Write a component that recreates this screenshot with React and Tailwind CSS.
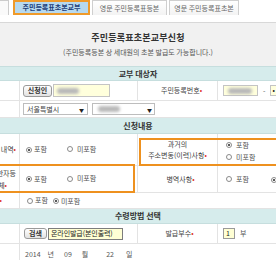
const Dot = () => <span className="text-[#e0322c]">•</span>;

function Radio({ checked }) {
  return (
    <span className="inline-flex items-center justify-center w-[6px] h-[6px] rounded-full border border-[#8a8a8a] bg-white shrink-0">
      {checked && <span className="w-[2px] h-[2px] rounded-full bg-[#222]" />}
    </span>
  );
}

function Opt({ checked, label, gap = "gap-[3px]" }) {
  return (
    <span className={`inline-flex items-center ${gap}`}>
      <Radio checked={checked} />
      <span>{label}</span>
    </span>
  );
}

function Header({ children, h }) {
  return (
    <div className={`${h} bg-[#d6ecec] border-b border-[#c6dede] flex items-center justify-center text-[8px] font-bold text-[#333]`}>
      <span>{children}</span>
    </div>
  );
}

function Blur({ w }) {
  return <span className={`block h-[6px] ${w} bg-[#b9b9b9] blur-[1.5px] rounded-sm`} />;
}

export default function App() {
  return (
    <div className="w-[276px] h-[260px] overflow-hidden bg-white text-[#444] font-['Noto_Sans_CJK_KR','Noto_Sans',sans-serif] leading-none">
      {/* tabs */}
      <div className="flex h-[15px] items-stretch">
        <div className="ml-[-67px] w-[76px] border border-t-[#ccc] border-x-[#ccc] border-b-0 bg-[#fafafa] flex items-center justify-center text-[7px] text-[#666]">주민등록표등본</div>
        <div className="ml-[4px] w-[77px] border-2 border-[#ef9a2a] bg-[#b7d9ef] flex items-center justify-center text-[7px] font-bold text-[#1c3d78]">주민등록표초본교부</div>
        <div className="ml-[2px] w-[75px] border border-[#cfcfcf] border-b-0 bg-gradient-to-b from-white to-[#f3f3f3] flex items-center justify-center text-[7px] text-[#666]">영문 주민등록표등본</div>
        <div className="ml-[2px] w-[70px] border border-[#cfcfcf] border-b-0 bg-gradient-to-b from-white to-[#f3f3f3] flex items-center justify-center text-[7px] text-[#666]">영문 주민등록표초본</div>
      </div>

      {/* title box */}
      <div className="mt-[7px] h-[44px] border-t border-[#d8d8d8] bg-[#f1f1f1] flex flex-col items-center pt-[9px]">
        <div className="text-[9px] font-bold text-[#333] leading-[12px] tracking-[0.2px]">주민등록표초본교부신청</div>
        <div className="mt-[3px] text-[7px] text-[#555] leading-[10px]">(주민등록등본 상 세대원의 초본 발급도 가능합니다.)</div>
      </div>

      {/* table */}
      <div className="relative ml-[-60px] w-[396px]">
        <div className="border-t border-[#c6dede]">
          <Header h="h-[14px]">교부 대상자</Header>

          {/* row 1 */}
          <div className="grid grid-cols-[80px_118px_80px_118px] h-[20px] border-b border-[#e3e3e3] text-[7px]">
            <div className="border-r border-[#e3e3e3] flex items-center justify-center">성명<Dot /></div>
            <div className="border-r border-[#e3e3e3] flex items-center pl-[3px] gap-[1px]">
              <span className="h-[12px] w-[29px] rounded-[3px] border border-[#9a9a9a] bg-gradient-to-b from-white to-[#e2e2e2] flex items-center justify-center font-bold text-[#333]">신청인</span>
              <span className="h-[13px] w-[57px] border border-[#c4c4c4] bg-[#ffffdc] flex items-center pl-[3px]"><Blur w="w-[22px]" /></span>
            </div>
            <div className="border-r border-[#e3e3e3] flex items-center justify-center pl-[8px]">주민등록번호<Dot /></div>
            <div className="flex items-center pl-[5px]">
              <span className="h-[11px] w-[35px] border border-[#c4c4c4] bg-[#ffffdc] flex items-center pl-[4px]"><Blur w="w-[24px]" /></span>
              <span className="mx-[5px] text-[#555]">-</span>
              <span className="h-[11px] w-[30px] border border-[#c4c4c4] bg-[#ffffdc] flex items-center pl-[1px] text-[#222]">•</span>
            </div>
          </div>

          {/* row 2 */}
          <div className="grid grid-cols-[80px_316px] h-[17px] border-b border-[#e3e3e3] text-[7px]">
            <div className="border-r border-[#e3e3e3] flex items-center justify-center">주소<Dot /></div>
            <div className="flex items-center pl-[3px] gap-[4px]">
              <span className="h-[12px] w-[65px] border border-[#bdbdbd] bg-white flex items-center justify-between pl-[3px] pr-[3px] text-[#444]">
                <span>서울특별시</span><span className="text-[5px] text-[#222]">▼</span>
              </span>
              <span className="h-[12px] w-[63px] border border-[#bdbdbd] bg-white flex items-center justify-between pl-[5px] pr-[2px]">
                <Blur w="w-[22px]" /><span className="text-[5px] text-[#222]">▼</span>
              </span>
            </div>
          </div>

          <Header h="h-[16px]">신청내용</Header>

          {/* row A */}
          <div className="grid grid-cols-[80px_118px_80px_118px] h-[32px] border-b border-[#e3e3e3] text-[7px]">
            <div className="border-r border-[#e3e3e3] flex items-center justify-end pr-[3px] whitespace-nowrap">인적사항 변경 내역<Dot /></div>
            <div className="border-r border-[#e3e3e3] flex items-center pl-[6px] text-[#555]">
              <Opt checked label="포함" gap="gap-[2px]" />
              <span className="ml-[20px]"><Opt label="미포함" gap="gap-[4px]" /></span>
            </div>
            <div className="border-r border-[#e3e3e3] flex flex-col items-center justify-center leading-[11px] whitespace-nowrap">
              <span>과거의</span>
              <span>주소변동(이력)사항<Dot /></span>
            </div>
            <div className="flex flex-col justify-center pl-[8px] gap-[5px] text-[#555] pt-[3px]">
              <Opt checked label="포함" gap="gap-[4px]" />
              <Opt label="미포함" gap="gap-[4px]" />
            </div>
          </div>

          {/* row B */}
          <div className="grid grid-cols-[80px_118px_80px_118px] h-[27px] border-b border-[#e3e3e3] text-[7px]">
            <div className="border-r border-[#e3e3e3] flex flex-col items-end justify-center leading-[12px] whitespace-nowrap">
              <span className="pr-[3px]">세대구성원 성명 한자등</span>
              <span className="pr-[12px]">표기 전체<Dot /></span>
            </div>
            <div className="border-r border-[#e3e3e3] flex items-center pl-[6px] text-[#555]">
              <Opt checked label="포함" gap="gap-[2px]" />
              <span className="ml-[20px]"><Opt label="미포함" gap="gap-[4px]" /></span>
            </div>
            <div className="border-r border-[#e3e3e3] flex items-center justify-center pl-[6px]">병역사항<Dot /></div>
            <div className="flex items-center pl-[8px] text-[#555]">
              <Opt label="포함" gap="gap-[4px]" />
              <span className="ml-[22px]"><Opt checked label="미포함" gap="gap-[4px]" /></span>
            </div>
          </div>

          {/* row C */}
          <div className="grid grid-cols-[80px_316px] h-[16px] border-b border-[#e3e3e3] text-[7px]">
            <div className="border-r border-[#e3e3e3] flex items-center justify-end pr-[17px] whitespace-nowrap">발생일<Dot /></div>
            <div className="flex items-center pl-[7px] text-[#555]">
              <Opt label="포함" gap="gap-[2px]" />
              <span className="ml-[5px]"><Opt checked label="미포함" gap="gap-[2px]" /></span>
            </div>
          </div>

          <Header h="h-[15px]">수령방법 선택</Header>

          {/* row D */}
          <div className="grid grid-cols-[80px_118px_80px_118px] h-[20px] border-b border-[#e3e3e3] text-[7px]">
            <div className="border-r border-[#e3e3e3] flex items-center justify-center">수령방법<Dot /></div>
            <div className="border-r border-[#e3e3e3] flex items-center pl-[4px] gap-[1px]">
              <span className="h-[11px] w-[23px] rounded-[3px] border border-[#9a9a9a] bg-gradient-to-b from-white to-[#e2e2e2] flex items-center justify-center font-bold text-[#333]">검색</span>
              <span className="h-[12px] w-[75px] border border-[#7d7d7d] bg-[#ffffd4] flex items-center pl-[2px] text-[7px] tracking-[-0.1px] whitespace-nowrap overflow-hidden text-[#222]">온라인발급(본인출력)</span>
            </div>
            <div className="border-r border-[#e3e3e3] flex items-center justify-center pl-[4px]">발급부수<Dot /></div>
            <div className="flex items-center pl-[5px]">
              <span className="h-[11px] w-[12px] border border-[#9a9a9a] bg-[#ffffd4] flex items-center pl-[2px] text-[#222]">1</span>
              <span className="ml-[5px] text-[#555]">부</span>
            </div>
          </div>

          {/* row E */}
          <div className="grid grid-cols-[80px_316px] h-[20px] text-[7px]">
            <div className="border-r border-[#e3e3e3] flex items-center justify-center">발급일자</div>
            <div className="flex items-center pl-[5px] text-[#555]">
              <span>2014</span>
              <span className="ml-[7px]">년</span>
              <span className="ml-[10px]">09</span>
              <span className="ml-[10px]">월</span>
              <span className="ml-[18px]">22</span>
              <span className="ml-[12px]">일</span>
            </div>
          </div>
        </div>

        {/* highlight boxes */}
        <div className="absolute left-[199px] top-[72px] w-[200px] h-[28px] border-2 border-[#ee911f] pointer-events-none" />
        <div className="absolute left-[20px] top-[98px] w-[175px] h-[29px] border-2 border-[#ee911f] pointer-events-none" />
      </div>
    </div>
  );
}
